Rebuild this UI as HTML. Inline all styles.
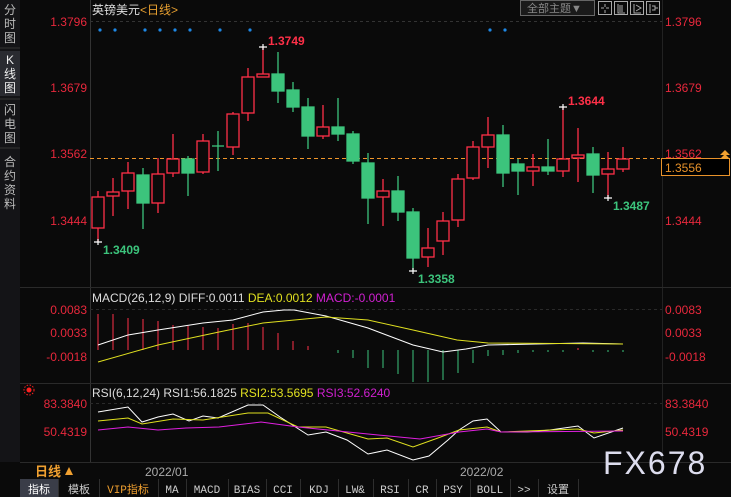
<!DOCTYPE html>
<html><head><meta charset="utf-8"><style>
body{margin:0;background:#0a0a0a;width:731px;height:497px;overflow:hidden;font-family:"Liberation Sans","Noto Sans CJK SC",sans-serif}
svg{position:absolute;left:0;top:0}
</style></head><body>
<svg width="731" height="497" viewBox="0 0 731 497" font-family="Liberation Sans, Noto Sans CJK SC, sans-serif">
<rect width="731" height="497" fill="#0a0a0a"/>
<!-- sidebar -->
<rect x="0" y="0" width="20" height="462" fill="#141417"/>
<rect x="0" y="51" width="20" height="45" fill="#2a2b31"/>
<g fill="#bbb" font-size="12" text-anchor="middle">
<text x="10" y="14">分</text><text x="10" y="28">时</text><text x="10" y="42">图</text>
<text x="10" y="64" fill="#eee">K</text><text x="10" y="78" fill="#eee">线</text><text x="10" y="92" fill="#eee">图</text>
<text x="10" y="114">闪</text><text x="10" y="128">电</text><text x="10" y="142">图</text>
<text x="10" y="166">合</text><text x="10" y="180">约</text><text x="10" y="194">资</text><text x="10" y="208">料</text>
</g>
<line x1="0" y1="48" x2="20" y2="48" stroke="#333"/><line x1="0" y1="99" x2="20" y2="99" stroke="#333"/><line x1="0" y1="148" x2="20" y2="148" stroke="#333"/>
<!-- frame -->
<line x1="90.5" y1="0" x2="90.5" y2="462" stroke="#333"/>
<line x1="662.5" y1="0" x2="662.5" y2="462" stroke="#222"/>
<line x1="20" y1="287.5" x2="731" y2="287.5" stroke="#2a2a2a"/>
<line x1="20" y1="383.5" x2="731" y2="383.5" stroke="#2a2a2a"/>
<line x1="20" y1="462.5" x2="731" y2="462.5" stroke="#2a2a2a"/>
<line x1="90" y1="21.5" x2="662" y2="21.5" stroke="#333" stroke-dasharray="3,3"/>
<line x1="90" y1="309.5" x2="662" y2="309.5" stroke="#2a2a2a" stroke-dasharray="3,3"/>
<line x1="90" y1="403.5" x2="662" y2="403.5" stroke="#2a2a2a" stroke-dasharray="3,3"/>
<!-- title -->
<text x="92" y="14" font-size="12" fill="#ddd">英镑美元<tspan fill="#e8a030">&lt;日线&gt;</tspan></text>
<!-- toolbar -->
<rect x="520.5" y="0.5" width="74" height="15" fill="#1a1a1a" stroke="#666"/>
<text x="527" y="12" font-size="11" fill="#888">全部主题▼</text>
<g fill="none" stroke="#aaa">
<rect x="598.5" y="1.5" width="13" height="13"/><rect x="614.5" y="1.5" width="13" height="13"/><rect x="630.5" y="1.5" width="13" height="13"/><rect x="646.5" y="1.5" width="13" height="13"/>
<path d="M605 4v3M605 10v3M601 8h3M606 8h3M618 4v9h7M620 5v7M622 5v7M634 4v9h7M636 5l5 3-5 3M650 4v9M652 6h3v4h-3M655 8h3"/>
</g>
<!-- axis labels -->
<g font-size="12" fill="#e8283c">
<text x="87" y="26" text-anchor="end">1.3796</text><text x="87" y="92" text-anchor="end">1.3679</text><text x="87" y="158" text-anchor="end">1.3562</text><text x="87" y="225" text-anchor="end">1.3444</text>
<text x="665" y="26">1.3796</text><text x="665" y="92">1.3679</text><text x="665" y="158">1.3562</text><text x="665" y="225">1.3444</text>
<text x="87" y="314" text-anchor="end">0.0083</text><text x="87" y="337" text-anchor="end">0.0033</text><text x="87" y="361" text-anchor="end">-0.0018</text>
<text x="665" y="314">0.0083</text><text x="665" y="337">0.0033</text><text x="665" y="361">-0.0018</text>
<text x="87" y="408" text-anchor="end">83.3840</text><text x="87" y="436" text-anchor="end">50.4319</text>
<text x="665" y="408">83.3840</text><text x="665" y="436">50.4319</text>
</g>
<!-- blue dots -->
<g fill="#1e88e5"><circle cx="100" cy="30" r="1.6"/><circle cx="115" cy="30" r="1.6"/><circle cx="145" cy="30" r="1.6"/><circle cx="160" cy="30" r="1.6"/><circle cx="175" cy="30" r="1.6"/><circle cx="190" cy="30" r="1.6"/><circle cx="220" cy="30" r="1.6"/><circle cx="250" cy="30" r="1.6"/><circle cx="490" cy="30" r="1.6"/><circle cx="505" cy="30" r="1.6"/></g>
<!-- dashed current price -->
<line x1="90" y1="158.5" x2="660" y2="158.5" stroke="#f0962a" stroke-dasharray="4,3"/>
<rect x="661.5" y="158.5" width="68" height="17" fill="#000" stroke="#e8922a"/>
<text x="665" y="172" font-size="12" fill="#e8922a">1.3556</text>
<path d="M720 155l5-5 5 5zM720 159l5-5 5 5z" fill="#f0a030"/>
<!-- candles -->
<g stroke-width="1.3">
<g stroke="#ff3048" fill="#0a0a0a">
<line x1="98" y1="191" x2="98" y2="242"/><rect x="92" y="197" width="12" height="31"/>
<line x1="113" y1="178" x2="113" y2="216"/><rect x="107" y="192" width="12" height="4"/>
<line x1="128" y1="162" x2="128" y2="209"/><rect x="122" y="173" width="12" height="18"/>
<line x1="158" y1="158" x2="158" y2="213"/><rect x="152" y="174" width="12" height="29"/>
<line x1="173" y1="134" x2="173" y2="177"/><rect x="167" y="159" width="12" height="14"/>
<line x1="203" y1="134" x2="203" y2="174"/><rect x="197" y="141" width="12" height="31"/>
<line x1="233" y1="112" x2="233" y2="155"/><rect x="227" y="114" width="12" height="33"/>
<line x1="248" y1="68" x2="248" y2="121"/><rect x="242" y="77" width="12" height="36"/>
<line x1="263" y1="47" x2="263" y2="77"/><rect x="257" y="74" width="12" height="3"/>
<line x1="323" y1="105" x2="323" y2="139"/><rect x="317" y="127" width="12" height="9"/>
<line x1="383" y1="179" x2="383" y2="226"/><rect x="377" y="191" width="12" height="6"/>
<line x1="428" y1="228" x2="428" y2="267"/><rect x="422" y="248" width="12" height="9"/>
<line x1="443" y1="212" x2="443" y2="255"/><rect x="437" y="221" width="12" height="20"/>
<line x1="458" y1="174" x2="458" y2="227"/><rect x="452" y="179" width="12" height="41"/>
<line x1="473" y1="141" x2="473" y2="180"/><rect x="467" y="147" width="12" height="31"/>
<line x1="488" y1="117" x2="488" y2="168"/><rect x="482" y="135" width="12" height="12"/>
<line x1="533" y1="154" x2="533" y2="186"/><rect x="527" y="167" width="12" height="4"/>
<line x1="563" y1="107" x2="563" y2="177"/><rect x="557" y="159" width="12" height="12"/>
<line x1="578" y1="128" x2="578" y2="182"/><rect x="572" y="155" width="12" height="3"/>
<line x1="608" y1="152" x2="608" y2="198"/><rect x="602" y="169" width="12" height="5"/>
<line x1="623" y1="147" x2="623" y2="172"/><rect x="617" y="159" width="12" height="10"/>
</g>
<g stroke="#3cc47c" fill="#3cc47c">
<line x1="143" y1="168" x2="143" y2="229"/><rect x="137" y="175" width="12" height="28"/>
<line x1="188" y1="156" x2="188" y2="196"/><rect x="182" y="159" width="12" height="14"/>
<line x1="218" y1="131" x2="218" y2="171"/><line x1="212" y1="146" x2="224" y2="146"/>
<line x1="278" y1="52" x2="278" y2="103"/><rect x="272" y="74" width="12" height="17"/>
<line x1="293" y1="82" x2="293" y2="112"/><rect x="287" y="90" width="12" height="17"/>
<line x1="308" y1="98" x2="308" y2="149"/><rect x="302" y="107" width="12" height="29"/>
<line x1="338" y1="98" x2="338" y2="141"/><rect x="332" y="127" width="12" height="7"/>
<line x1="353" y1="131" x2="353" y2="164"/><rect x="347" y="134" width="12" height="27"/>
<line x1="368" y1="153" x2="368" y2="224"/><rect x="362" y="163" width="12" height="35"/>
<line x1="398" y1="176" x2="398" y2="221"/><rect x="392" y="191" width="12" height="21"/>
<line x1="413" y1="208" x2="413" y2="271"/><rect x="407" y="212" width="12" height="46"/>
<line x1="503" y1="125" x2="503" y2="187"/><rect x="497" y="135" width="12" height="38"/>
<line x1="518" y1="159" x2="518" y2="195"/><rect x="512" y="164" width="12" height="7"/>
<line x1="548" y1="139" x2="548" y2="175"/><rect x="542" y="167" width="12" height="4"/>
<line x1="593" y1="147" x2="593" y2="193"/><rect x="587" y="154" width="12" height="21"/>
</g>
</g>
<!-- markers -->
<g stroke="#fff" stroke-width="1.2"><path d="M94 242h8M98 239v6M259 47h8M263 44v6M409 271h8M413 268v6M559 107h8M563 104v6M604 198h8M608 195v6"/></g>
<g font-size="12" font-weight="bold">
<text x="103" y="254" fill="#3cc47c">1.3409</text><text x="268" y="45" fill="#ff3048">1.3749</text>
<text x="418" y="283" fill="#3cc47c">1.3358</text><text x="568" y="105" fill="#ff3048">1.3644</text><text x="613" y="210" fill="#3cc47c">1.3487</text>
</g>
<!-- MACD -->
<text x="92" y="302" font-size="12" fill="#ddd">MACD(26,12,9) DIFF:0.0011 <tspan fill="#e0e020">DEA:0.0012</tspan> <tspan fill="#d020d0">MACD:-0.0001</tspan></text>
<g stroke="#ff3048"><path d="M98 314V350M113 314V350M128 318V350M143 319V350M158 321V350M173 325V350M188 326V350M203 327V350M218 328V350M233 324V350M248 323V350M263 327V350M278 333V350M293 341V350M308 346V350M578 348V350"/></g>
<g stroke="#3cc47c"><path d="M338 350V353M353 350V358M368 350V368M383 350V368M398 350V374M413 350V382M428 350V382M443 350V380M458 350V373M473 350V363M488 350V356M503 350V355M518 350V353M533 350V352M548 350V352M563 350V352M593 350V352M608 350V352M623 350V352"/></g>
<polyline fill="none" stroke="#fff" points="98,345 128,335 158,330 203,323 233,320 263,312 284,310 294,310 326,316 368,328 413,345 443,352 466,349 488,345 536,344 583,343 623,344"/>
<polyline fill="none" stroke="#e0e020" points="98,362 158,345 219,332 263,323 326,317 368,320 413,330 457,340 488,343 623,344"/>
<!-- RSI -->
<circle cx="29" cy="390" r="2.5" fill="#ff2020"/><circle cx="29" cy="390" r="5" fill="none" stroke="#ff2020" stroke-dasharray="1.5,1.5"/>
<text x="92" y="397" font-size="12" fill="#ddd">RSI(6,12,24) RSI1:56.1825 <tspan fill="#e0e020">RSI2:53.5695</tspan> <tspan fill="#d020d0">RSI3:52.6240</tspan></text>
<polyline fill="none" stroke="#fff" points="98,412 128,407 142,422 158,417 173,414 189,421 203,416 218,418 248,405 263,405 280,417 308,435 326,432 347,440 368,454 387,450 413,460 429,456 448,440 459,430 473,421 487,419 501,432 527,432 550,430 578,426 594,438 623,428"/>
<polyline fill="none" stroke="#e0e020" points="98,421 128,418 142,424 173,419 203,420 248,413 268,413 298,427 326,427 368,439 387,438 413,447 438,438 459,430 487,427 501,432 578,429 594,433 623,430"/>
<polyline fill="none" stroke="#e020e0" points="98,430 128,427 158,430 186,428 219,427 261,422 298,427 368,434 420,439 459,432 487,429 501,432 623,431"/>
<!-- date bar -->
<rect x="20" y="463" width="70" height="16" fill="#0a0a0a"/>
<text x="35" y="476" font-size="13" font-weight="bold" fill="#f0a030">日线</text>
<path d="M65 475l4-8 4 8z" fill="#f0a030"/>
<text x="145" y="476" font-size="12" fill="#aaa">2022/01</text>
<text x="460" y="476" font-size="12" fill="#aaa">2022/02</text>
<text x="603" y="474" font-size="32" fill="#dde" letter-spacing="2">FX678</text>
<!-- tabs -->
<rect x="0" y="479" width="731" height="18" fill="#0a0a0a"/>
<rect x="20" y="479" width="38" height="18" fill="#3a3d48"/>
<g stroke="#2e2e2e"><path d="M58.5 479v18M99.5 479v18M158.5 479v18M186.5 479v18M228.5 479v18M266.5 479v18M300.5 479v18M338.5 479v18M373.5 479v18M408.5 479v18M436.5 479v18M470.5 479v18M510.5 479v18M538.5 479v18M578.5 479v18"/></g>
<g font-size="11" fill="#ccc" text-anchor="middle" font-family="Liberation Mono, Noto Sans CJK SC, monospace">
<text x="39" y="493" fill="#fff">指标</text><text x="79" y="493">模板</text><text x="128" y="493" fill="#f0a030">VIP指标</text>
<text x="172" y="493">MA</text><text x="207" y="493">MACD</text><text x="247" y="493">BIAS</text><text x="283" y="493">CCI</text><text x="319" y="493">KDJ</text><text x="355" y="493">LW&amp;</text><text x="390" y="493">RSI</text><text x="422" y="493">CR</text><text x="453" y="493">PSY</text><text x="490" y="493">BOLL</text><text x="524" y="493">&gt;&gt;</text><text x="558" y="493">设置</text>
</g>
</svg>
</body></html>
